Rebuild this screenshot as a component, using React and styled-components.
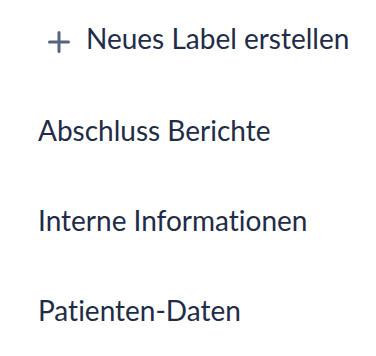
import styled, { createGlobalStyle } from 'styled-components';

const GlobalStyle = createGlobalStyle`
	html, body {
		margin: 0;
		padding: 0;
		background: #ffffff;
	}
	body {
		font-family: Lato, 'Open Sans', sans-serif;
		font-variant-ligatures: none;
	}
`;

const LabelMenu = styled.div`
	width: 376px;
	height: 356px;
	display: flex;
	flex-direction: column;
	background: #ffffff;
	overflow: hidden;
`;

const AddButton = styled.button`
	display: flex;
	align-items: flex-start;
	gap: 16px;
	height: 86px;
	padding: 22px 0 0 48px;
	margin: 0;
	border: none;
	background: none;
	font-family: Lato, sans-serif;
	font-size: 28px;
	font-variant-ligatures: none;
	line-height: 1.2;
	color: #222c47;
	cursor: pointer;
	text-align: left;
`;

const PlusIcon = styled.svg`
	width: 22px;
	height: 22px;
	margin-top: 9px;
	flex-shrink: 0;
`;

const LabelItem = styled.div`
	display: flex;
	align-items: center;
	height: 90px;
	padding-left: 38px;
	font-family: Lato, sans-serif;
	font-size: 28px;
	font-variant-ligatures: none;
	line-height: 1.2;
	color: #222c47;
`;

const labels = ['Abschluss Berichte', 'Interne Informationen', 'Patienten-Daten'];

function App() {
	return (
		<>
			<GlobalStyle />
			<LabelMenu>
				<AddButton>
					<PlusIcon viewBox='0 0 22 22'>
						<path d='M11 1.5v19M1.5 11h19' stroke='#56647d' strokeWidth='3' strokeLinecap='round' fill='none' />
					</PlusIcon>
					Neues Label erstellen
				</AddButton>
				{labels.map((label) => (
					<LabelItem key={label}>{label}</LabelItem>
				))}
			</LabelMenu>
		</>
	);
}

export default App;
